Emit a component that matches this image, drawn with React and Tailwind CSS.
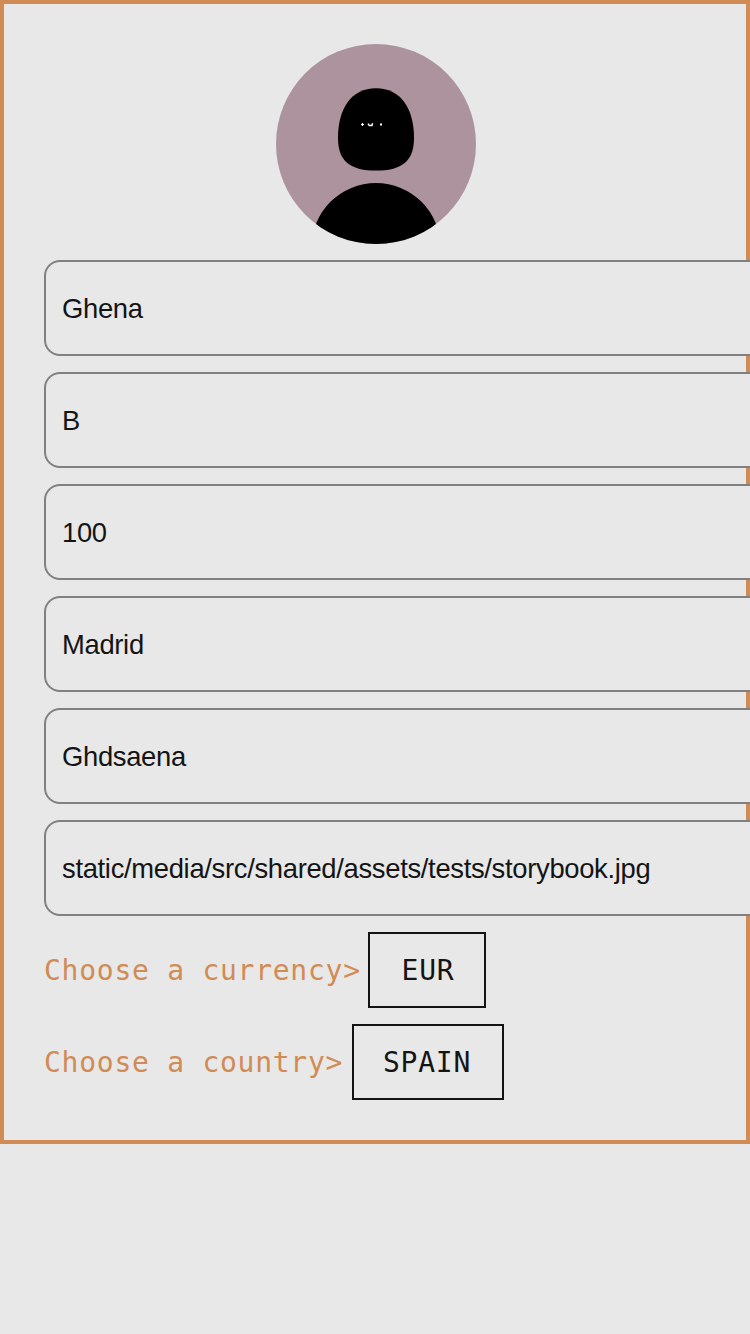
const fields = [
  'Ghena',
  'B',
  '100',
  'Madrid',
  'Ghdsaena',
  'static/media/src/shared/assets/tests/storybook.jpg',
];

function Avatar() {
  return (
    <svg viewBox="0 0 200 200" className="ml-[232px] block h-[200px] w-[200px] shrink-0">
      <defs>
        <clipPath id="avatar-circle">
          <circle cx="100" cy="100" r="100" />
        </clipPath>
      </defs>
      <g clipPath="url(#avatar-circle)">
        <rect width="200" height="200" fill="#ad939d" />
        <path d="M100 44.3C125 44.3 138 65 138 94C138 118 125 126.6 100 126.6C75 126.6 62 118 62 94C62 65 75 44.3 100 44.3Z" />
        <circle cx="100" cy="203.4" r="64.4" />
        <path d="M86.5 79v3M85 80.5h3M104 80.5h2" stroke="#fff" strokeWidth="1.2" fill="none" />
        <path d="M105 79.5v2" stroke="#fff" strokeWidth="2" fill="none" />
        <path d="M92.5 79.5v1.2l1 .8h2.4l.7-2.2" stroke="#fff" strokeWidth="1.5" fill="none" />
      </g>
    </svg>
  );
}

function Field({ value }) {
  return (
    <div className="flex h-24 w-[780px] shrink-0 items-center rounded-2xl border-2 border-[#808080] bg-[#e8e8e8] pt-0.5 pl-4 text-[27.4px] tracking-[-0.32px] text-[#141414]">
      {value}
    </div>
  );
}

function Choice({ label, value, labelWidth, width }) {
  return (
    <div className="flex h-[76px] items-center gap-2 font-['DejaVu_Sans_Mono',monospace] text-[28px] tracking-[0.74px]">
      <span className={`shrink-0 pt-0.5 whitespace-nowrap text-[#d18b54] ${labelWidth}`}>
        {label}&gt;
      </span>
      <button className={`h-[76px] shrink-0 border-2 border-[#141414] pt-0.5 text-[#141414] ${width}`}>
        {value}
      </button>
    </div>
  );
}

export default function App() {
  return (
    <main className="h-[1334px] w-[750px] overflow-hidden bg-[#e8e8e8] font-['Liberation_Sans',Arial,sans-serif]">
      <section className="flex h-[1144px] w-[750px] flex-col gap-4 border-4 border-[#d18b54] p-10">
        <Avatar />
        {fields.map((value) => (
          <Field key={value} value={value} />
        ))}
        <Choice label="Choose a currency" value="EUR" labelWidth="w-[316px]" width="w-[118px] pl-0.5" />
        <Choice label="Choose a country" value="SPAIN" labelWidth="w-[300px]" width="w-[152px] pr-0.5" />
      </section>
    </main>
  );
}
